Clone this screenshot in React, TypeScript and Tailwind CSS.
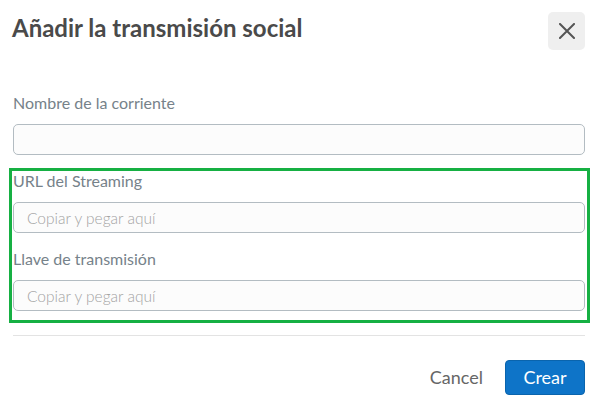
import React from 'react';

const font = { fontFamily: 'Lato, "Open Sans", sans-serif' };

const Field = ({ label, placeholder, className = '' }: { label: string; placeholder?: string; className?: string }) => (
  <div className={className}>
    <label className="block text-[16px] leading-5 text-[#76828a]">{label}</label>
    <input
      type="text"
      placeholder={placeholder}
      className="mt-[11px] block h-[31px] w-full rounded-[5px] border border-[#b3bcc2] bg-[#fcfcfc] px-[13px] text-[15.5px] font-light text-[#555] placeholder:text-[#a3a3a3] focus:outline-none"
    />
  </div>
);

const App = () => {
  return (
    <div className="h-[409px] w-[601px] overflow-hidden bg-white" style={font}>
      {/* Header */}
      <div className="flex items-start justify-between pl-[12px] pr-[16px] pt-[12px]">
        <h1 className="mt-[1px] text-[24px] font-bold leading-[30px] text-[#4a4a4a]">Añadir la transmisión social</h1>
        <button className="flex h-[38px] w-[37px] items-center justify-center rounded-[5px] bg-[#efefef]">
          <svg width="16" height="16" viewBox="0 0 16 16" fill="none" stroke="#555" strokeWidth="2" strokeLinecap="square">
            <path d="M1 1 L15 15 M15 1 L1 15" />
          </svg>
        </button>
      </div>

      {/* Body */}
      <div className="pt-[43px]">
        <Field label="Nombre de la corriente" className="pl-[13px] pr-[16px]" />

        <div className="ml-[9px] mr-[11px] mt-[13px] border-[3px] border-[#16b043] pb-[9px] pl-[1px] pr-[2px]">
          <Field label="URL del Streaming" placeholder="Copiar y pegar aquí" />
          <Field label="Llave de transmisión" placeholder="Copiar y pegar aquí" className="mt-[16px]" />
        </div>

        <div className="ml-[13px] mr-[16px] mt-[12px] h-px bg-[#e3e3e3]" />

        {/* Footer */}
        <div className="flex items-center justify-end gap-[22px] pr-[16px] pt-[24px]">
          <button className="text-[18px] text-[#666]">Cancel</button>
          <button className="h-[35px] w-[80px] rounded-[4px] border border-[#0a64ad] bg-[#0e74c8] text-[18px] text-white">
            Crear
          </button>
        </div>
      </div>
    </div>
  );
};

export default App;
